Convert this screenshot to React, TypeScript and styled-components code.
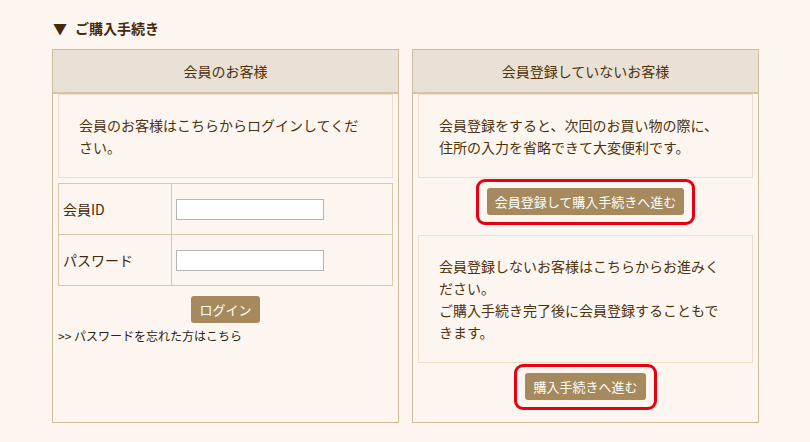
import React from 'react';
import styled, { createGlobalStyle } from 'styled-components';

const GlobalStyle = createGlobalStyle`
  body {
    margin: 0;
    background: #fdf6f0;
    font-family: "Noto Sans CJK JP", "Noto Sans", sans-serif;
    color: #4e320c;
  }
`;

const Page = styled.div`
  width: 810px;
  height: 442px;
  padding: 18px 0 0 52px;
  box-sizing: border-box;
  overflow: hidden;
`;

const Title = styled.h2`
  margin: 0 0 11px 1px;
  height: 20px;
  display: flex;
  align-items: center;
  gap: 8px;
  font-size: 14px;
  line-height: 20px;
  font-weight: bold;
  color: #45290a;
`;

const Columns = styled.div`
  display: grid;
  grid-template-columns: 347px 347px;
  gap: 13px;
  align-items: stretch;
`;

const Panel = styled.section`
  border: 1px solid #cdbd9d;
  background: #fdf6f0;
  display: flex;
  flex-direction: column;
`;

const PanelHead = styled.div`
  height: 42px;
  border-bottom: 2px solid #d3c4a6;
  background: #e9e1d5;
  display: flex;
  align-items: center;
  justify-content: center;
  font-size: 14px;
  color: #4e320a;
`;

const PanelBody = styled.div`
  padding: 0 5px;
`;

const Note = styled.div`
  border: 1px solid #efdfca;
  padding: 19px 22px 19px 20px;
  font-size: 14px;
  line-height: 22px;
  color: #4e320c;
`;

const LoginTable = styled.table`
  margin-top: 5px;
  width: 100%;
  border-collapse: collapse;
  font-size: 14px;
  color: #45290a;

  td {
    border: 1px solid #d9c8a8;
    height: 50px;
    padding: 0 4px;
  }

  td:first-child {
    width: 104px;
  }
`;

const TextInput = styled.input`
  width: 148px;
  height: 21px;
  box-sizing: border-box;
  border: 1px solid #b4b4b4;
  background: #fff;
  padding: 0 3px;
  display: block;
`;

const ButtonRow = styled.div<{ $top: number; $bottom: number }>`
  display: flex;
  justify-content: center;
  padding: ${p => p.$top}px 0 ${p => p.$bottom}px;
`;

const Button = styled.button`
  height: 27px;
  padding: 0 8px;
  border: none;
  border-radius: 3px;
  background: #a68a5e;
  color: #fff;
  font-family: inherit;
  font-size: 13px;
  line-height: 27px;
  cursor: pointer;
`;

const Marked = styled.span`
  position: relative;
  display: inline-block;

  &::after {
    content: "";
    position: absolute;
    inset: -9px -11px -10px -11px;
    border: 3px solid #e60012;
    border-radius: 9px;
    pointer-events: none;
  }
`;

const ForgotLink = styled.a`
  display: block;
  margin-top: 5px;
  font-size: 12px;
  line-height: 16px;
  color: #2e2212;
  text-decoration: none;
`;

export default function App() {
  return (
    <>
      <GlobalStyle />
      <Page>
        <Title>
          <span>▼</span>
          <span>ご購入手続き</span>
        </Title>
        <Columns>
          <Panel>
            <PanelHead>会員のお客様</PanelHead>
            <PanelBody>
              <Note>会員のお客様はこちらからログインしてください。</Note>
              <LoginTable>
                <tbody>
                  <tr>
                    <td>会員ID</td>
                    <td><TextInput type="text" /></td>
                  </tr>
                  <tr>
                    <td>パスワード</td>
                    <td><TextInput type="password" /></td>
                  </tr>
                </tbody>
              </LoginTable>
              <ButtonRow $top={10} $bottom={0}>
                <Button>ログイン</Button>
              </ButtonRow>
              <ForgotLink href="#">&gt;&gt; パスワードを忘れた方はこちら</ForgotLink>
            </PanelBody>
          </Panel>
          <Panel>
            <PanelHead>会員登録していないお客様</PanelHead>
            <PanelBody>
              <Note>会員登録をすると、次回のお買い物の際に、住所の入力を省略できて大変便利です。</Note>
              <ButtonRow $top={10} $bottom={20}>
                <Marked>
                  <Button>会員登録して購入手続きへ進む</Button>
                </Marked>
              </ButtonRow>
              <Note>
                会員登録しないお客様はこちらからお進みください。
                <br />
                ご購入手続き完了後に会員登録することもできます。
              </Note>
              <ButtonRow $top={10} $bottom={22}>
                <Marked>
                  <Button>購入手続きへ進む</Button>
                </Marked>
              </ButtonRow>
            </PanelBody>
          </Panel>
        </Columns>
      </Page>
    </>
  );
}
